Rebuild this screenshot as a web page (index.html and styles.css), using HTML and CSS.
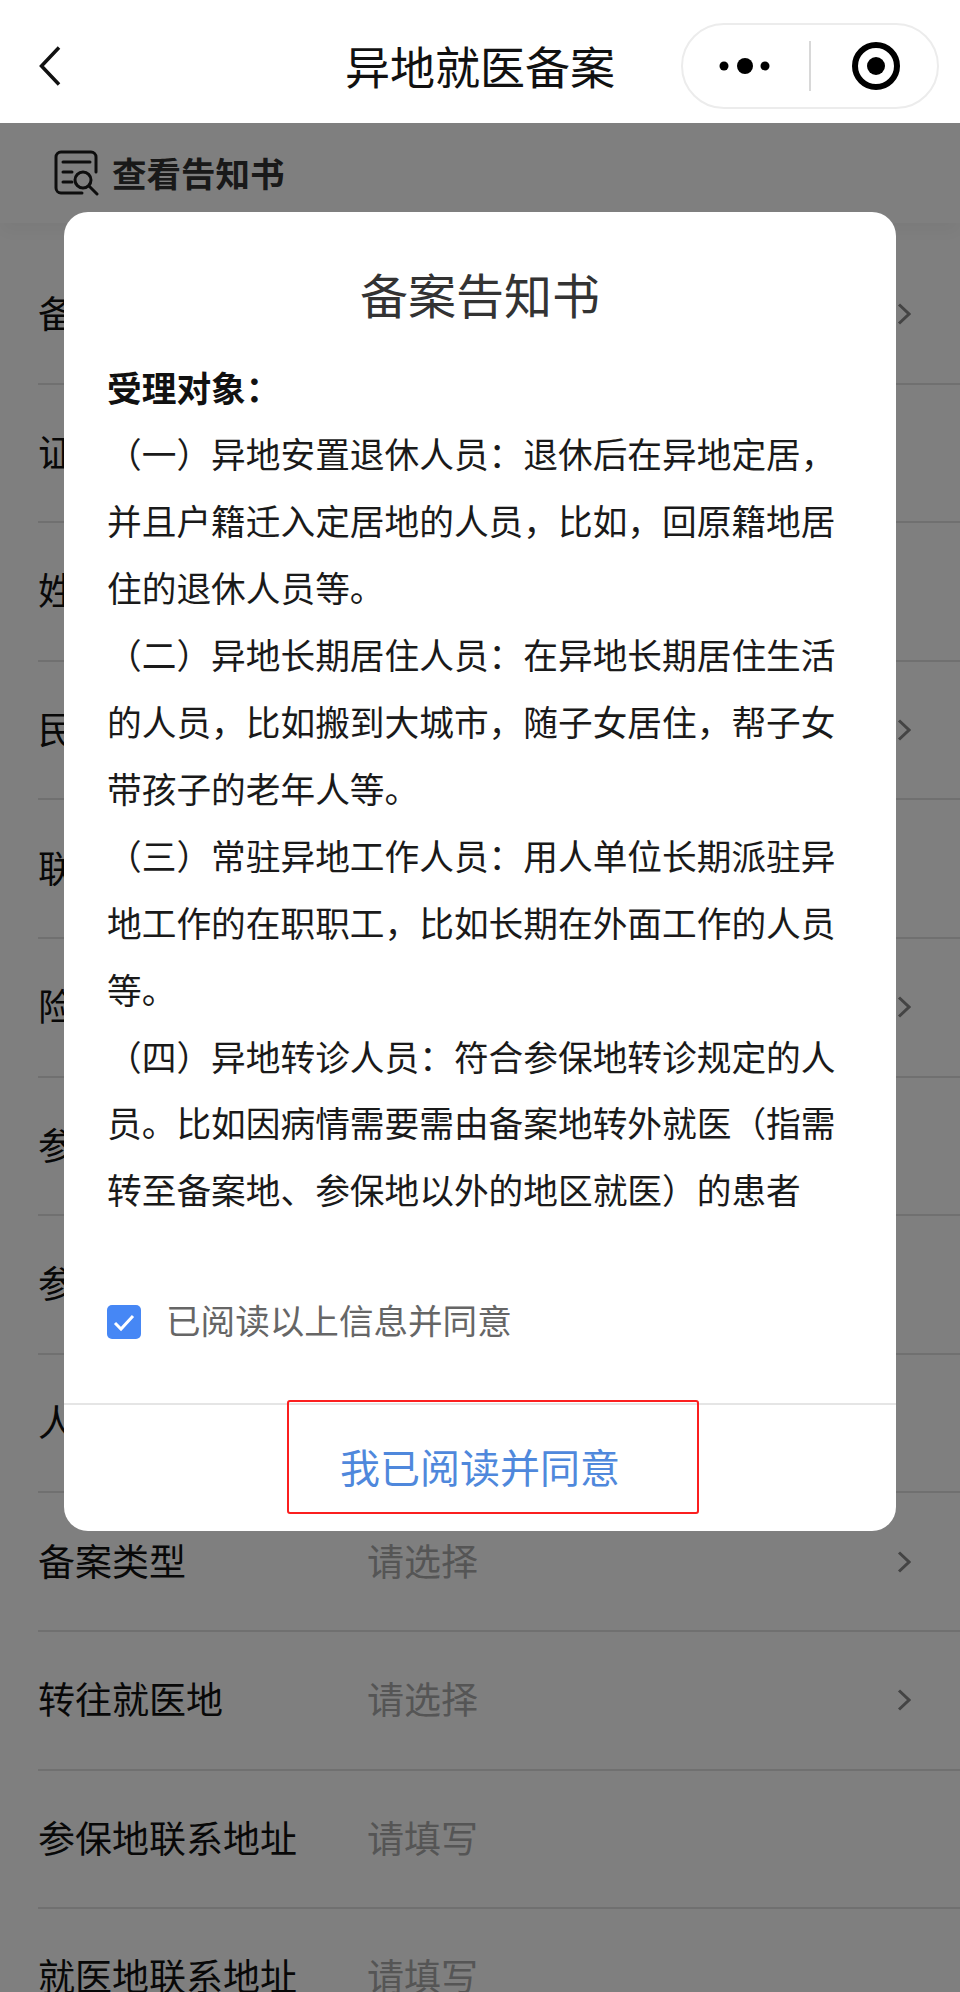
FILE: index.html
```html
<!DOCTYPE html>
<html lang="zh-CN">
<head>
<meta charset="utf-8">
<title>异地就医备案</title>
<link rel="stylesheet" href="styles.css">
</head>
<body>
<div class="page">
  <header class="nav">
    <svg class="back" viewBox="0 0 22 40"><path d="M20 1.5 2.5 20 20 38.5"/></svg>
    <h1 class="nav-title">异地就医备案</h1>
    <div class="capsule">
      <svg class="dots" viewBox="0 0 60 18"><circle cx="8" cy="9" r="4.5"/><circle cx="29" cy="9" r="8"/><circle cx="49" cy="9" r="4.5"/></svg>
      <span class="capsule-sep"></span>
      <svg class="target" viewBox="0 0 48 48"><circle class="ring" cx="24" cy="24" r="21"/><circle cx="24" cy="24" r="9"/></svg>
    </div>
  </header>

  <div class="notice">
    <svg class="doc" viewBox="0 0 46 46"><path d="M42 22V7a5 5 0 0 0-5-5H7a5 5 0 0 0-5 5v31a5 5 0 0 0 5 5h21M9 12h27M9 22h9M9 32h9M35 36l8 8"/><circle cx="29" cy="30" r="8"/></svg>
    <span class="notice-text">查看告知书</span>
  </div>

  <main class="form">
    <div class="row"><span class="label">备案地</span><span class="value"></span><svg class="chev" viewBox="0 0 14 22"><path d="M2 1.5 12 11 2 20.5"/></svg></div>
    <div class="row"><span class="label">证件类型</span><span class="value"></span></div>
    <div class="row"><span class="label">姓名</span><span class="value"></span></div>
    <div class="row"><span class="label">民族</span><span class="value"></span><svg class="chev" viewBox="0 0 14 22"><path d="M2 1.5 12 11 2 20.5"/></svg></div>
    <div class="row"><span class="label">联系电话</span><span class="value"></span></div>
    <div class="row"><span class="label">险种类型</span><span class="value"></span><svg class="chev" viewBox="0 0 14 22"><path d="M2 1.5 12 11 2 20.5"/></svg></div>
    <div class="row"><span class="label">参保地</span><span class="value"></span></div>
    <div class="row"><span class="label">参保状态</span><span class="value"></span></div>
    <div class="row"><span class="label">人员类别</span><span class="value"></span></div>
    <div class="row"><span class="label">备案类型</span><span class="value">请选择</span><svg class="chev" viewBox="0 0 14 22"><path d="M2 1.5 12 11 2 20.5"/></svg></div>
    <div class="row"><span class="label">转往就医地</span><span class="value">请选择</span><svg class="chev" viewBox="0 0 14 22"><path d="M2 1.5 12 11 2 20.5"/></svg></div>
    <div class="row"><span class="label">参保地联系地址</span><span class="value">请填写</span></div>
    <div class="row"><span class="label">就医地联系地址</span><span class="value">请填写</span></div>
  </main>

  <div class="overlay">
    <section class="modal">
      <h2 class="modal-title">备案告知书</h2>
      <div class="modal-body">
        <p class="lead">受理对象：</p>
        <p>（一）异地安置退休人员：退休后在异地定居，并且户籍迁入定居地的人员，比如，回原籍地居住的退休人员等。</p>
        <p>（二）异地长期居住人员：在异地长期居住生活的人员，比如搬到大城市，随子女居住，帮子女带孩子的老年人等。</p>
        <p>（三）常驻异地工作人员：用人单位长期派驻异地工作的在职职工，比如长期在外面工作的人员等。</p>
        <p>（四）异地转诊人员：符合参保地转诊规定的人员。比如因病情需要需由备案地转外就医（指需转至备案地、参保地以外的地区就医）的患者</p>
      </div>
      <div class="agree">
        <span class="check"><svg viewBox="0 0 34 34"><path d="M8 18l6 6 12-13"/></svg></span>
        <span class="agree-text">已阅读以上信息并同意</span>
      </div>
      <div class="modal-foot">我已阅读并同意</div>
      <div class="annotation"></div>
    </section>
  </div>
</div>
</body>
</html>
```

FILE: styles.css
```css
* { box-sizing: border-box; }
html, body { margin: 0; padding: 0; }
body {
  font-family: "Noto Sans CJK SC", "Noto Sans", sans-serif;
  background: #fff;
  text-spacing-trim: space-all;
}
.page {
  position: relative;
  width: 960px;
  height: 1992px;
  overflow: hidden;
  background: #fff;
}
.nav {
  position: relative;
  height: 123px;
  display: flex;
  align-items: center;
  justify-content: center;
  background: #fff;
}
.back {
  position: absolute;
  left: 39px;
  top: 46px;
  width: 22px;
  height: 40px;
  fill: none;
  stroke: #111;
  stroke-width: 3.5;
}
.nav-title {
  margin: 0;
  font-size: 45px;
  font-weight: 400;
  line-height: 60px;
  color: #111;
  padding-top: 8px;
}
.capsule {
  position: absolute;
  left: 681px;
  top: 23px;
  width: 258px;
  height: 86px;
  border: 2px solid #ececec;
  border-radius: 43px;
  background: #fff;
  display: flex;
  align-items: center;
}
.dots { width: 60px; height: 18px; margin-left: 33px; fill: #000; }
.capsule-sep { width: 2px; height: 50px; background: #d8d8d8; margin-left: 33px; }
.target { width: 48px; height: 48px; margin-left: 41px; fill: #000; }
.target .ring { fill: none; stroke: #000; stroke-width: 6; }

.notice {
  height: 100px;
  display: flex;
  align-items: flex-start;
  padding: 27px 0 0 54px;
  background: #fff;
  box-shadow: 0 10px 16px rgba(0, 0, 0, 0.04);
}
.doc {
  width: 46px;
  height: 46px;
  fill: none;
  stroke: #1a1a1a;
  stroke-width: 3;
  stroke-linecap: round;
  flex: none;
}
.notice-text {
  margin-left: 12px;
  font-size: 34.5px;
  font-weight: 700;
  line-height: 44px;
  color: #333;
}

.form {
  padding: 23px 0 0 38px;
}
.row {
  height: 138.6px;
  display: flex;
  align-items: center;
  border-bottom: 2px solid #e0e0e0;
  padding: 0 49px 4px 0;
}
.label {
  width: 329px;
  flex: none;
  font-size: 37px;
  color: #111;
  white-space: nowrap;
}
.value {
  flex: 1;
  font-size: 37px;
  color: #aaa;
}
.chev {
  width: 14px;
  height: 22px;
  margin-top: 4px;
  fill: none;
  stroke: #888;
  stroke-width: 3;
  flex: none;
}

.overlay {
  position: absolute;
  left: 0;
  right: 0;
  top: 123px;
  bottom: 0;
  background: rgba(0, 0, 0, 0.5);
  padding: 89px 64px 0;
}
.modal {
  position: relative;
  height: 1319px;
  background: #fff;
  border-radius: 24px;
  display: flex;
  flex-direction: column;
  padding-top: 50.5px;
}
.modal-title {
  margin: 0;
  font-size: 48px;
  font-weight: 400;
  line-height: 60px;
  text-align: center;
  color: #333;
}
.modal-body {
  margin: 31px 0 0;
  padding: 0 40px 0 43px;
  font-size: 34.7px;
  line-height: 66.9px;
  color: #1a1a1a;
  height: 870px;
  overflow: hidden;
}
.modal-body p { margin: 0; }
.modal-body .lead { font-weight: 700; color: #111; }
.agree {
  display: flex;
  align-items: center;
  margin: 81px 0 0 43px;
  height: 34px;
}
.check {
  width: 34px;
  height: 34px;
  border-radius: 5px;
  background: #4687f5;
  flex: none;
}
.check svg {
  display: block;
  width: 34px;
  height: 34px;
  fill: none;
  stroke: #fff;
  stroke-width: 3;
}
.agree-text {
  margin-left: 25px;
  padding-bottom: 5px;
  font-size: 34.6px;
  color: #666;
}
.modal-foot {
  margin-top: auto;
  height: 128px;
  padding-bottom: 4px;
  border-top: 2px solid #e5e5e5;
  display: flex;
  align-items: center;
  justify-content: center;
  font-size: 40px;
  color: #4f88dc;
}
.annotation {
  position: absolute;
  left: 223px;
  top: 1188px;
  width: 412px;
  height: 114px;
  border: 2.5px solid #fb1f1f;
  border-radius: 3px;
}
```
